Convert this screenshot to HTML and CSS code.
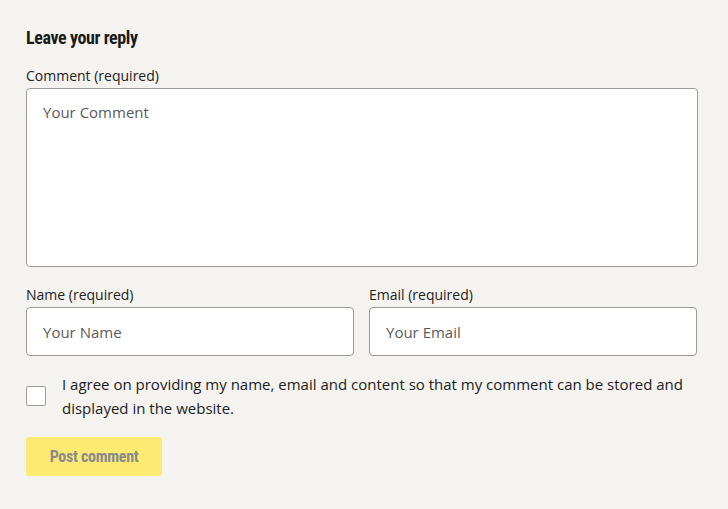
FILE: index.html
```html
<!DOCTYPE html>
<html lang="en">
<head>
  <meta charset="UTF-8">
  <meta name="viewport" content="width=device-width, initial-scale=1.0">
  <title>Leave your reply</title>
  <link rel="stylesheet" href="styles.css">
</head>
<body>
  <form class="reply-form">
    <h3 class="reply-title">Leave your reply</h3>

    <div class="field">
      <label for="comment">Comment (required)</label>
      <textarea id="comment" name="comment" placeholder="Your Comment" required></textarea>
    </div>

    <div class="field-row">
      <div class="field">
        <label for="name">Name (required)</label>
        <input type="text" id="name" name="name" placeholder="Your Name" required>
      </div>
      <div class="field">
        <label for="email">Email (required)</label>
        <input type="email" id="email" name="email" placeholder="Your Email" required>
      </div>
    </div>

    <div class="consent">
      <input type="checkbox" id="consent" name="consent">
      <label for="consent">I agree on providing my name, email and content so that my comment can be stored and displayed in the website.</label>
    </div>

    <button type="submit" class="submit-btn" disabled>Post comment</button>
  </form>
</body>
</html>
```

FILE: styles.css
```css
body {
  margin: 0;
  padding: 26px 30px 26px 26px;
  background: #f4f3ef;
  font-family: 'Open Sans', 'Lato', sans-serif;
  color: #222;
}

.reply-form {
  width: 672px;
}

.reply-title {
  font-family: 'Roboto', sans-serif;
  font-stretch: condensed;
  font-weight: 700;
  font-size: 18px;
  line-height: 24px;
  letter-spacing: -0.4px;
  margin: 0 0 16px;
  color: #1a1a1a;
}

label {
  display: block;
  font-size: 14px;
  line-height: 20px;
  margin-bottom: 2px;
  color: #222;
}

.field {
  margin-bottom: 18px;
}

textarea,
input[type="text"],
input[type="email"] {
  display: block;
  width: 100%;
  box-sizing: border-box;
  border: 1px solid #9a9a9a;
  border-radius: 4px;
  background: #fff;
  font-family: inherit;
  font-size: 15px;
  color: #222;
  padding: 0 16px;
}

textarea {
  height: 179px;
  padding-top: 13px;
  resize: none;
}

input[type="text"],
input[type="email"] {
  height: 49px;
}

::placeholder {
  color: #5a5a5a;
}

.field-row {
  display: flex;
  gap: 15px;
}

.field-row .field {
  width: 328px;
  margin-bottom: 16px;
}

.consent {
  display: flex;
  align-items: center;
  gap: 16px;
}

.consent input {
  flex: none;
  width: 20px;
  height: 20px;
  margin: 0;
  appearance: none;
  background: #fff;
  border: 1px solid #9a9a9a;
  border-radius: 2px;
}

.consent label {
  font-size: 15px;
  line-height: 24px;
  margin: 0;
}

.submit-btn {
  display: block;
  margin-top: 17px;
  width: 136px;
  height: 39px;
  border: none;
  border-radius: 3px;
  background: #fcea73;
  color: #8a8a8a;
  font-family: 'Roboto', sans-serif;
  font-stretch: condensed;
  font-weight: 700;
  font-size: 16px;
  letter-spacing: -0.3px;
}
```
